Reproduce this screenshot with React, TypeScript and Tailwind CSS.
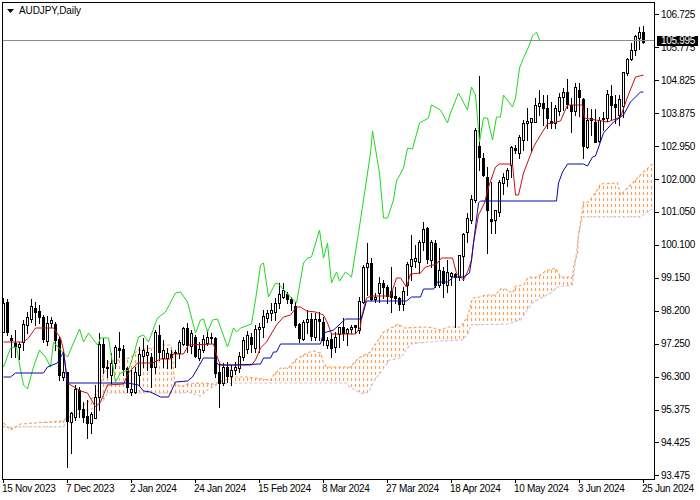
type Pt = [number, number];
type Candle = [number, number, number, number, number];

const fromZoom = (rows: Candle[], yBase: number) =>
  rows.map(([h, t, b, l, f]): Candle => [yBase + h / 3, yBase + t / 3, yBase + b / 3, yBase + l / 3, f]);

// candles read off the chart, in crop px: high, body top, body bottom, low, black
const part1: Candle[] = [
  [85,98,185,185,0],[88,97,185,195,1],[195,205,210,260,1],[180,220,228,260,1],[215,222,230,268,0],[150,162,215,240,0],
  [125,140,165,190,0],[88,108,148,155,0],[95,114,125,165,1],[105,124,140,160,1],[135,141,207,215,1],[138,160,212,225,0],
  [140,150,160,170,0],[155,163,210,240,1],[200,208,315,330,1],[250,305,320,330,0],[305,305,452,592,1],[425,430,455,548,0],
  [345,358,440,450,0],[350,360,418,440,1],[395,418,440,455,1],[390,437,458,503,1],[425,432,460,490,0],[345,380,445,445,0],
  [190,222,380,420,0],[205,222,292,310,1],[270,290,292,320,1],[250,280,315,340,0],[225,232,280,295,0],[185,235,240,260,1],
  [225,238,298,315,1],[290,293,352,365,1],[300,358,365,375,0],[290,305,365,370,0],[230,253,315,345,0],[205,240,258,290,0],
  [225,245,255,300,0],[248,262,290,350,1],[180,185,292,310,0],[165,195,245,270,1],[210,240,265,290,0],[235,248,265,295,0],
  [240,252,262,295,1],[240,245,250,290,1],[210,215,248,265,0],[170,175,222,225,0],[160,175,225,245,1],[180,190,228,250,0],
  [195,200,258,262,1],[215,238,265,270,0],[195,208,240,245,0],[180,200,218,225,0],[190,200,205,218,1],[200,204,308,320,1],
  [280,305,340,410,1],[280,292,340,345,0],[275,290,318,335,1],[285,300,318,345,0],
];
const part2: Candle[] = [
  [575,590,600,612,0],[545,558,595,605,0],[500,510,560,570,0],[482,495,538,550,0],[490,500,522,545,1],[465,478,535,545,0],
  [460,472,478,545,0],[420,438,472,500,0],[420,430,445,455,0],[400,420,428,450,0],[385,400,425,450,0],[340,372,398,415,0],
  [338,360,382,385,0],[365,372,388,400,1],[380,388,400,420,1],[395,408,465,470,1],[460,462,505,515,1],[450,455,508,510,0],
  [420,448,455,490,0],[430,448,498,510,1],[430,448,500,510,0],[425,448,452,510,1],[440,455,510,525,1],[500,510,525,535,0],
  [490,507,535,560,1],[485,500,532,545,0],[470,472,492,530,0],[445,472,490,510,1],[475,478,488,525,0],[465,470,476,490,0],
  [465,465,470,490,1],[380,393,480,490,0],[285,290,395,400,0],[220,280,290,375,0],[265,280,388,390,1],[370,380,388,395,0],
  [320,340,370,395,0],[330,340,352,385,1],[345,352,378,400,1],[290,362,382,425,1],[350,378,385,400,1],[380,385,403,420,1],
  [350,362,403,420,0],[275,283,345,375,0],[195,268,287,330,0],[225,265,272,290,0],[210,215,275,310,0],[155,178,215,240,0],
  [170,175,268,280,1],[210,215,270,290,0],[210,218,345,350,1],[235,300,345,350,0],[290,302,340,380,1],[270,307,345,365,0],
  [305,310,318,345,0],[308,312,322,470,1],[255,255,320,330,0],[190,193,258,330,0],
];
const part3: Candle[] = [
  [430,445,485,515,0],[375,388,450,458,0],[175,180,390,395,0],[18,228,260,300,1],[250,265,315,318,1],[290,322,420,548,1],
  [335,448,452,490,1],[420,420,450,490,0],[330,335,425,438,0],[310,322,340,372,0],[295,300,328,348,0],[228,230,285,320,0],
  [225,235,240,250,1],[195,200,248,265,0],[150,160,210,240,0],[115,153,160,210,0],[145,145,155,245,0],[85,105,155,155,0],
  [60,100,107,135,0],
];
const part4: Candle[] = [
  [225,250,265,315,1],[225,265,293,325,1],[245,303,310,325,1],[255,265,310,325,0],[220,232,272,285,0],[205,215,232,270,0],
  [178,215,252,265,1],[235,255,272,337,1],[190,200,272,285,0],[190,210,230,287,1],[235,237,377,415,1],[265,300,382,385,0],
  [268,295,300,345,1],[268,305,365,365,1],[290,300,362,365,0],[275,293,298,330,1],[210,222,295,302,0],[195,228,255,300,1],
  [225,252,262,310,1],[225,237,285,315,0],[155,155,258,290,0],[115,118,160,165,0],[70,90,118,120,0],[45,48,90,105,0],
  [22,37,55,88,0],[18,37,65,68,1],
];

const candles: Candle[] = [
  ...fromZoom(part1, 270),
  ...fromZoom(part2, 170),
  ...fromZoom(part3, 70),
  ...fromZoom(part4, 20),
];

const chikou: Pt[] = [
  [3,367],[10,348],[16,347],[20,370],[23,385],[27,389],[33,367],[39,350],[45,357],[50,367],[53,342],[60,350],[67,357],[79,329],[83,342],[88,333],[97,345],[100,338],[108,338],[115,382],[120,373],[128,370],[133,355],[138,337],[143,335],[148,342],[157,318],[165,312],[175,293],[180,292],[187,302],[195,333],[200,320],[203,319],[207,332],[212,320],[217,319],[222,333],[227,347],[233,328],[236,332],[240,328],[251,324],[255,300],[260,265],[263,263],[268,297],[275,283],[278,284],[288,295],[296,303],[303,263],[307,258],[311,257],[319,230],[323,258],[327,243],[331,283],[336,272],[339,281],[345,272],[351,277],[358,233],[363,200],[370,153],[372,131],[379,173],[383,218],[387,218],[393,200],[396,181],[403,168],[407,148],[412,149],[419,123],[428,118],[431,105],[440,110],[447,123],[450,113],[458,93],[467,110],[471,87],[475,95],[479,142],[483,118],[487,118],[492,140],[496,117],[500,117],[503,95],[512,107],[515,98],[519,68],[523,58],[528,47],[532,36],[536,32],[539,40],
];
const tenkan: Pt[] = [
  [3,342],[23,342],[28,338],[35,328],[53,328],[60,338],[63,350],[67,383],[80,391],[87,393],[95,407],[100,402],[107,385],[123,384],[128,373],[137,363],[152,363],[160,359],[170,359],[173,354],[183,354],[188,345],[213,344],[217,358],[220,365],[233,365],[251,365],[255,360],[260,348],[266,342],[276,325],[283,317],[290,315],[296,307],[300,307],[306,311],[315,312],[323,315],[327,323],[331,334],[355,334],[360,327],[361,317],[366,298],[371,296],[390,296],[396,278],[400,278],[406,287],[410,274],[420,273],[425,267],[436,264],[441,258],[452,258],[456,273],[463,280],[467,272],[471,260],[473,243],[478,215],[484,203],[488,187],[495,167],[499,164],[512,164],[515,195],[518,195],[523,173],[533,147],[540,135],[547,124],[560,121],[567,105],[582,105],[584,118],[607,122],[620,117],[627,97],[635,77],[643,75],
];
const kijun: Pt[] = [
  [3,377],[10,377],[15,373],[43,373],[47,367],[57,363],[63,352],[67,383],[127,383],[138,385],[143,391],[150,392],[160,397],[168,397],[175,382],[187,381],[192,377],[203,358],[213,358],[218,365],[233,365],[260,364],[263,358],[270,358],[273,352],[276,352],[280,344],[320,344],[323,333],[333,330],[345,319],[361,319],[366,301],[406,301],[411,297],[420,297],[423,289],[433,289],[437,282],[447,282],[453,277],[463,277],[469,273],[471,260],[473,243],[478,203],[480,201],[556,201],[558,183],[562,172],[567,164],[583,164],[587,166],[592,157],[595,156],[603,133],[613,122],[623,115],[630,102],[640,92],[643,92],
];
const spanA: Pt[] = [
  [3,423],[10,430],[20,424],[63,421],[68,415],[75,411],[90,400],[97,392],[103,375],[108,362],[118,360],[130,358],[137,350],[152,348],[162,345],[170,345],[172,352],[174,383],[180,387],[187,384],[200,383],[213,384],[225,380],[233,377],[246,377],[270,380],[273,375],[280,368],[288,368],[295,360],[306,353],[313,351],[320,353],[323,363],[326,367],[350,367],[358,358],[370,352],[383,332],[398,324],[403,328],[426,327],[433,328],[440,330],[447,327],[460,327],[467,317],[472,298],[480,297],[485,295],[495,295],[500,289],[505,289],[512,293],[515,286],[523,285],[528,277],[537,277],[545,271],[555,268],[560,277],[572,277],[573,267],[577,253],[578,235],[582,210],[583,202],[588,202],[595,193],[600,184],[617,183],[620,195],[627,188],[643,172],[652,164],
];
const spanB: Pt[] = [
  [3,427],[63,427],[68,417],[80,413],[93,408],[103,400],[107,393],[174,393],[182,393],[187,392],[200,396],[207,390],[217,384],[233,383],[346,383],[350,388],[363,394],[368,392],[373,382],[389,360],[400,358],[410,344],[440,341],[462,340],[468,333],[470,325],[507,324],[520,320],[528,308],[533,302],[550,293],[557,287],[572,285],[573,277],[578,235],[582,217],[640,217],[650,210],[652,209],
];

const interp = (pts: Pt[], x: number) => {
  for (let i = 1; i < pts.length; i++) {
    if (x <= pts[i][0]) {
      const [x0, y0] = pts[i - 1];
      const [x1, y1] = pts[i];
      return y0 + ((y1 - y0) * (x - x0)) / (x1 - x0 || 1);
    }
  }
  return pts[pts.length - 1][1];
};

const toPoints = (pts: Pt[]) => pts.map(([x, y]) => `${x + 0.5},${y}`).join(' ');

const cloudCols = Array.from({ length: 163 }, (_, i) => 3 + 4 * i);

const prices = [
  '106.725', '105.775', '104.825', '103.875', '102.950', '102.000', '101.050', '100.100',
  '99.150', '98.200', '97.250', '96.300', '95.375', '94.425', '93.475',
];
const dates = [
  '15 Nov 2023', '7 Dec 2023', '2 Jan 2024', '24 Jan 2024', '15 Feb 2024', '8 Mar 2024',
  '27 Mar 2024', '18 Apr 2024', '10 May 2024', '3 Jun 2024', '25 Jun 2024',
];

function Chart() {
  return (
    <svg viewBox="3 3 651 475" className="block w-[651px] h-[475px]">
      {/* kumo */}
      {cloudCols.map((x) => {
        const a = interp(spanA, x);
        const b = interp(spanB, x);
        const top = Math.min(a, b);
        const bottom = Math.max(a, b);
        return (
          <line
            key={x}
            x1={x + 0.5}
            x2={x + 0.5}
            y1={top}
            y2={bottom}
            stroke="#f4a460"
            strokeWidth={1.25}
            strokeDasharray="3 3"
            strokeDashoffset={top % 6}
          />
        );
      })}
      <polyline points={toPoints(spanB)} fill="none" stroke="#d8bfd8" strokeWidth={1.2} strokeDasharray="3 2" />
      <polyline points={toPoints(spanA)} fill="none" stroke="#f4a460" strokeWidth={1.2} strokeDasharray="3 2" />

      {candles.map(([h, t, b, l, black], i) => {
        const x = 3 + 4 * i;
        const top = Math.round(t);
        const bottom = Math.max(Math.round(b), top + 1);
        return (
          <g key={i} shapeRendering="crispEdges">
            <line x1={x + 0.5} x2={x + 0.5} y1={Math.round(h)} y2={Math.round(l) + 1} stroke="#000" />
            <rect
              x={x - 0.5}
              y={top + 0.5}
              width={2}
              height={bottom - top}
              fill={black ? '#000' : '#fff'}
              stroke="#000"
            />
          </g>
        );
      })}

      <polyline points={toPoints(chikou)} fill="none" stroke="#1ed81e" />
      <polyline points={toPoints(tenkan)} fill="none" stroke="#c80f0f" />
      <polyline points={toPoints(kijun)} fill="none" stroke="#0808a8" />
    </svg>
  );
}

export default function App() {
  return (
    <div className="relative w-[700px] h-[500px] overflow-hidden bg-white text-black font-['Liberation_Sans',Arial,sans-serif] text-[10px] leading-none pl-[2px] pt-[2px]">
      <div className="flex h-[478px]">
        <div className="relative w-[653px] h-[478px] border border-black">
          <Chart />
          <div className="absolute left-0 right-0 top-[37px] h-px bg-[#8c8c8c]" />
          <div className="absolute left-[4px] top-[2px] flex items-center gap-[5px] h-[11px]">
            <svg viewBox="0 0 7 4" className="w-[7px] h-[4px]">
              <path d="M0 0h7L3.5 4z" fill="#000" />
            </svg>
            <span className="tracking-[-0.1px]">AUDJPY,Daily</span>
          </div>
        </div>
        <div className="relative -mt-[3.5px] flex flex-col">
          {prices.map((p) => (
            <div key={p} className="flex items-center gap-[2px] h-[32.93px] shrink-0">
              <div className="w-[4px] h-px bg-black" />
              <span className="tracking-[-0.3px]">{p}</span>
            </div>
          ))}
          <div className="absolute left-[2px] top-[37.5px] w-[41px] h-[10px] bg-black text-white flex items-center pl-[4px] tracking-[-0.3px]">
            105.995
          </div>
        </div>
      </div>
      <div className="flex -mt-px">
        {dates.map((d) => (
          <div key={d} className="w-[64px] shrink-0 pl-px">
            <div className="w-px h-[4px] bg-black" />
            <div className="mt-[1px] -ml-px whitespace-nowrap tracking-[-0.3px]">{d}</div>
          </div>
        ))}
      </div>
    </div>
  );
}
